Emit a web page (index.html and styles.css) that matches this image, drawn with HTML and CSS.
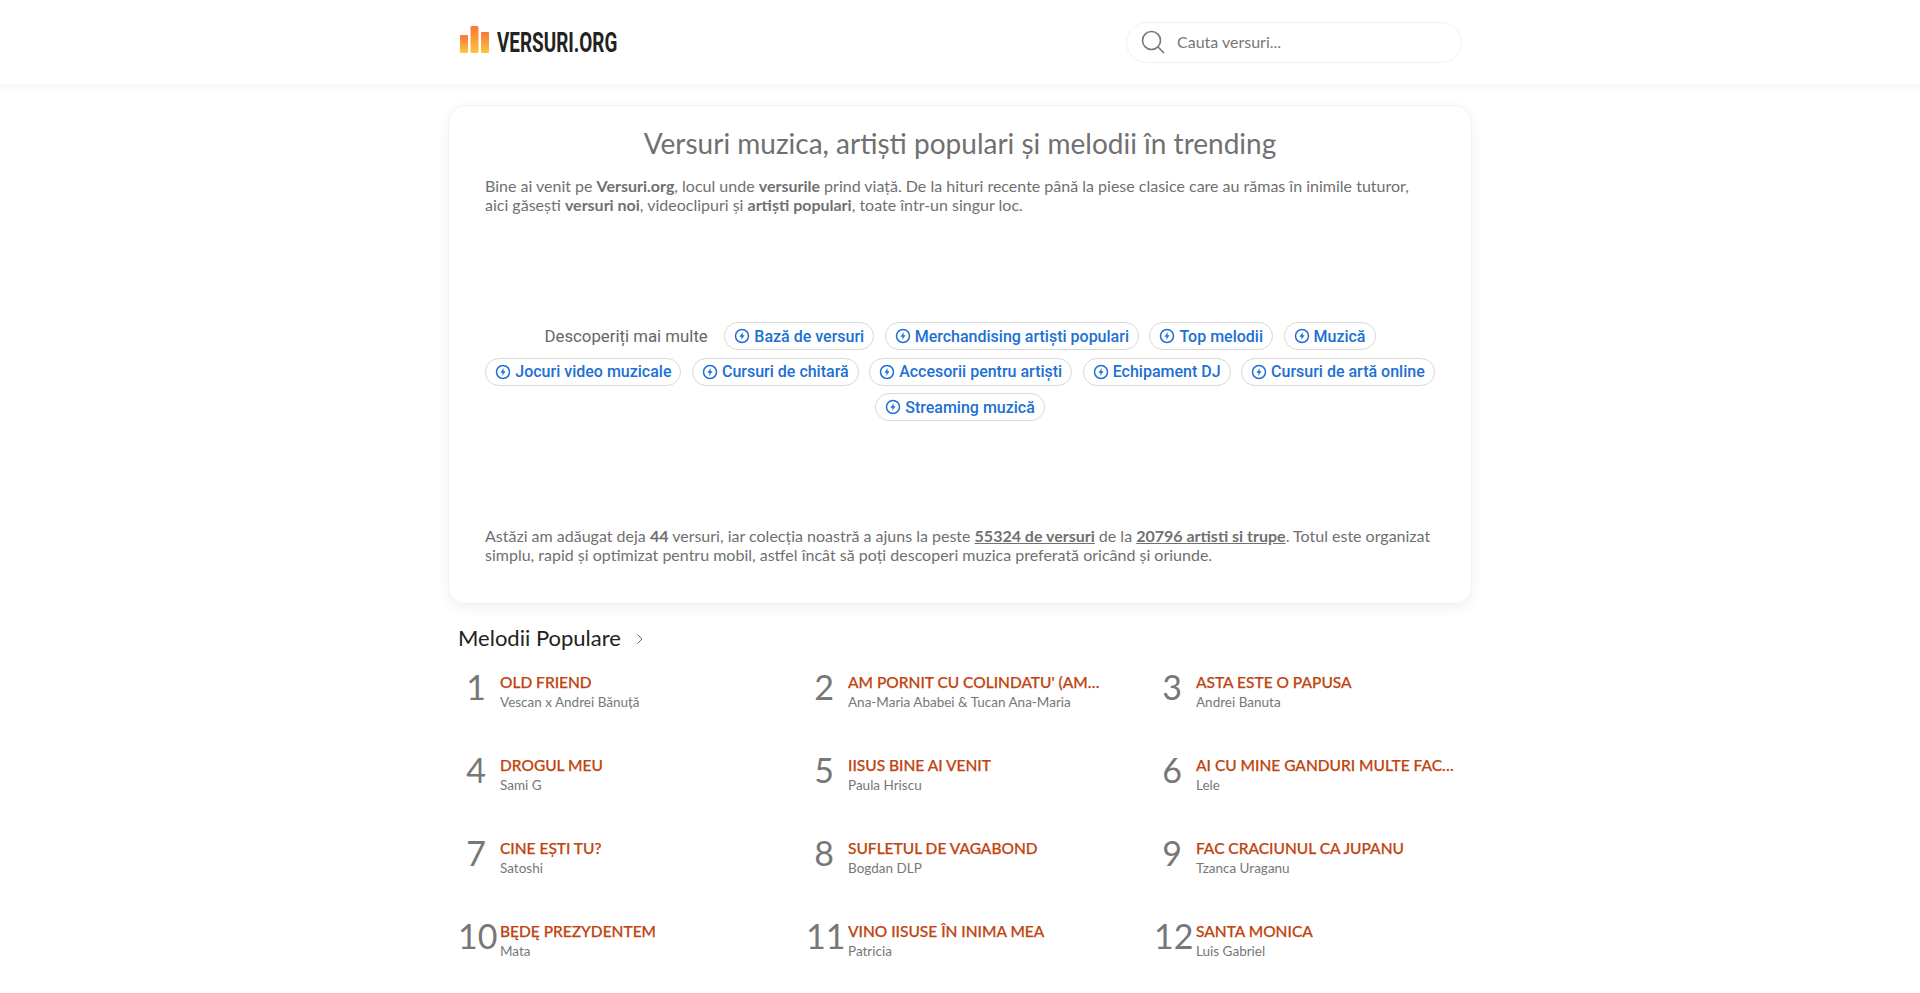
FILE: index.html
```html
<!DOCTYPE html>
<html lang="ro">
<head>
<meta charset="UTF-8">
<meta name="viewport" content="width=device-width, initial-scale=1.0">
<title>Versuri.org</title>
<link rel="stylesheet" href="styles.css">
</head>
<body>
    <header class="topbar">
        <div class="topbar-inner">
            <a class="logo" href="#">
                <svg class="logo-bars" width="29" height="27" viewBox="0 0 29 27">
                    <defs>
                        <linearGradient id="barFill" x1="0" y1="0" x2="0" y2="1">
                            <stop offset="0" stop-color="#f9763a"/>
                            <stop offset="1" stop-color="#fdc63f"/>
                        </linearGradient>
                    </defs>
                    <rect x="0" y="9" width="8" height="18" rx="1" fill="url(#barFill)" />
                    <rect x="10.500" y="0" width="8" height="27" rx="1.500" fill="url(#barFill)" />
                    <rect x="21" y="6" width="8" height="21" rx="1" fill="url(#barFill)" />
                </svg>
                <span class="logo-text">VERSURI.ORG</span>
            </a>
            <div class="search">
                <svg width="24" height="24" viewBox="0 0 24 24" fill="none" stroke="#777" stroke-width="1.600">
                    <circle cx="10.500" cy="10.500" r="9"/>
                    <path d="M17 17l6 6"/>
                </svg>
                <span class="search-hint">Cauta versuri...</span>
            </div>
        </div>
    </header>

    <main class="page">
        <section class="intro">
            <h1>Versuri muzica, artiști populari și melodii în trending</h1>
            <p>Bine ai venit pe <b>Versuri.org</b>, locul unde <b>versurile</b> prind viață. De la hituri recente până la piese clasice care au rămas în inimile tuturor, aici găsești <b>versuri noi</b>, videoclipuri și <b>artiști populari</b>, toate într-un singur loc.</p>

            <div class="chips">
                <span class="chips-label">Descoperiți mai multe</span>
                <a class="chip" href="#"><svg viewBox="0 0 16 16"><circle cx="8" cy="8" r="6.500"/><path class="bolt" d="M8.900 3.900 5.400 8.800h2.200l-.5 3.300 3.500-4.900H8.400z"/></svg>Bază de versuri</a>
                <a class="chip" href="#"><svg viewBox="0 0 16 16"><circle cx="8" cy="8" r="6.500"/><path class="bolt" d="M8.900 3.900 5.400 8.800h2.200l-.5 3.300 3.500-4.900H8.400z"/></svg>Merchandising artiști populari</a>
                <a class="chip" href="#"><svg viewBox="0 0 16 16"><circle cx="8" cy="8" r="6.500"/><path class="bolt" d="M8.900 3.900 5.400 8.800h2.200l-.5 3.300 3.500-4.900H8.400z"/></svg>Top melodii</a>
                <a class="chip" href="#"><svg viewBox="0 0 16 16"><circle cx="8" cy="8" r="6.500"/><path class="bolt" d="M8.900 3.900 5.400 8.800h2.200l-.5 3.300 3.500-4.900H8.400z"/></svg>Muzică</a>
                <a class="chip" href="#"><svg viewBox="0 0 16 16"><circle cx="8" cy="8" r="6.500"/><path class="bolt" d="M8.900 3.900 5.400 8.800h2.200l-.5 3.300 3.500-4.900H8.400z"/></svg>Jocuri video muzicale</a>
                <a class="chip" href="#"><svg viewBox="0 0 16 16"><circle cx="8" cy="8" r="6.500"/><path class="bolt" d="M8.900 3.900 5.400 8.800h2.200l-.5 3.300 3.500-4.900H8.400z"/></svg>Cursuri de chitară</a>
                <a class="chip" href="#"><svg viewBox="0 0 16 16"><circle cx="8" cy="8" r="6.500"/><path class="bolt" d="M8.900 3.900 5.400 8.800h2.200l-.5 3.300 3.500-4.900H8.400z"/></svg>Accesorii pentru artiști</a>
                <a class="chip" href="#"><svg viewBox="0 0 16 16"><circle cx="8" cy="8" r="6.500"/><path class="bolt" d="M8.900 3.900 5.400 8.800h2.200l-.5 3.300 3.500-4.900H8.400z"/></svg>Echipament DJ</a>
                <a class="chip" href="#"><svg viewBox="0 0 16 16"><circle cx="8" cy="8" r="6.500"/><path class="bolt" d="M8.900 3.900 5.400 8.800h2.200l-.5 3.300 3.500-4.900H8.400z"/></svg>Cursuri de artă online</a>
                <a class="chip" href="#"><svg viewBox="0 0 16 16"><circle cx="8" cy="8" r="6.500"/><path class="bolt" d="M8.900 3.900 5.400 8.800h2.200l-.5 3.300 3.500-4.900H8.400z"/></svg>Streaming muzică</a>
            </div>

            <p>Astăzi am adăugat deja <b>44</b> versuri, iar colecția noastră a ajuns la peste <a class="stat" href="#">55324 de versuri</a> de la <a class="stat" href="#">20796 artisti si trupe</a>. Totul este organizat simplu, rapid și optimizat pentru mobil, astfel încât să poți descoperi muzica preferată oricând și oriunde.</p>
        </section>

        <h2 class="section-title">Melodii Populare
            <svg width="10" height="12" viewBox="0 0 10 12" fill="none" stroke="#666" stroke-width="1"><path d="M2.500 1.500 7 6l-4.500 4.500"/></svg>
        </h2>

        <div class="songs">
            <div class="song"><span class="rank">1</span><div class="song-info"><a class="song-title" href="#">OLD FRIEND</a><span class="song-artist">Vescan x Andrei Bănuță</span></div></div>
            <div class="song"><span class="rank">2</span><div class="song-info"><a class="song-title" href="#">AM PORNIT CU COLINDATU' (AMINTIRI DIN COPILARIE)</a><span class="song-artist">Ana-Maria Ababei &amp; Tucan Ana-Maria</span></div></div>
            <div class="song"><span class="rank">3</span><div class="song-info"><a class="song-title" href="#">ASTA ESTE O PAPUSA</a><span class="song-artist">Andrei Banuta</span></div></div>
            <div class="song"><span class="rank">4</span><div class="song-info"><a class="song-title" href="#">DROGUL MEU</a><span class="song-artist">Sami G</span></div></div>
            <div class="song"><span class="rank">5</span><div class="song-info"><a class="song-title" href="#">IISUS BINE AI VENIT</a><span class="song-artist">Paula Hriscu</span></div></div>
            <div class="song"><span class="rank">6</span><div class="song-info"><a class="song-title" href="#">AI CU MINE GANDURI MULTE FACUTE DE TINE</a><span class="song-artist">Lele</span></div></div>
            <div class="song"><span class="rank">7</span><div class="song-info"><a class="song-title" href="#">CINE EȘTI TU?</a><span class="song-artist">Satoshi</span></div></div>
            <div class="song"><span class="rank">8</span><div class="song-info"><a class="song-title" href="#">SUFLETUL DE VAGABOND</a><span class="song-artist">Bogdan DLP</span></div></div>
            <div class="song"><span class="rank">9</span><div class="song-info"><a class="song-title" href="#">FAC CRACIUNUL CA JUPANU</a><span class="song-artist">Tzanca Uraganu</span></div></div>
            <div class="song"><span class="rank">10</span><div class="song-info"><a class="song-title" href="#">BĘDĘ PREZYDENTEM</a><span class="song-artist">Mata</span></div></div>
            <div class="song"><span class="rank">11</span><div class="song-info"><a class="song-title" href="#">VINO IISUSE ÎN INIMA MEA</a><span class="song-artist">Patricia</span></div></div>
            <div class="song"><span class="rank">12</span><div class="song-info"><a class="song-title" href="#">SANTA MONICA</a><span class="song-artist">Luis Gabriel</span></div></div>
        </div>
    </main>
</body>
</html>
```

FILE: styles.css
```css
html, body {
    height: 100%;
    overflow: hidden;
}
body {
    margin: 0;
    font-family: Lato, sans-serif;
    background: #fff;
    color: #666;
}
a {
    text-decoration: none;
    color: inherit;
}

/* header */
.topbar {
    height: 84px;
    background: #fff;
    box-shadow: 0 1px 10px rgba(0, 0, 0, 0.07);
    position: relative;
}
.topbar-inner {
    width: 1024px;
    height: 100%;
    margin: 0 auto;
    display: flex;
    align-items: center;
    justify-content: space-between;
}
.logo {
    display: flex;
    align-items: center;
    gap: 8px;
    margin-left: 12px;
}
.logo-bars {
    margin-bottom: 5px;
}
.logo-text {
    font-family: Roboto, sans-serif;
    font-weight: 700;
    font-size: 28px;
    color: #222;
    display: inline-block;
    width: 120px;
    transform: scaleX(0.675);
    transform-origin: left center;
    white-space: nowrap;
}
.search {
    width: 336px;
    height: 41px;
    margin-right: 10px;
    box-sizing: border-box;
    border: 1px solid #f1f1f1;
    border-radius: 21px;
    display: flex;
    align-items: center;
    gap: 12px;
    padding-left: 14px;
}
.search-hint {
    font-size: 16px;
    color: #777;
    margin-bottom: 1px;
}

/* intro card */
.page {
    width: 1024px;
    margin: 0 auto;
}
.intro {
    margin-top: 21px;
    padding: 17px 36px 0;
    height: 499px;
    box-sizing: border-box;
    border: 1px solid #f3f3f3;
    border-radius: 18px;
    box-shadow: 0 4px 14px rgba(0, 0, 0, 0.06);
}
.intro h1 {
    margin: 0 0 13px;
    font-size: 28px;
    font-weight: 400;
    line-height: 40px;
    text-align: center;
    color: #707070;
}
.intro p {
    margin: 0;
    font-size: 16px;
    line-height: 19px;
    color: #707070;
}
.intro b {
    font-weight: 700;
}
.stat {
    font-weight: 700;
    text-decoration: underline;
}

/* related chips */
.chips {
    height: 312px;
    box-sizing: border-box;
    padding-top: 108px;
    margin: 0 -2px;
    display: flex;
    flex-wrap: wrap;
    justify-content: center;
    align-content: flex-start;
    align-items: center;
    column-gap: 10.500px;
    row-gap: 7.500px;
    font-family: Roboto, sans-serif;
}
.chips-label {
    font-size: 16.800px;
    color: #666;
    margin-right: 6px;
}
.chip {
    display: inline-flex;
    align-items: center;
    gap: 4px;
    height: 28px;
    box-sizing: border-box;
    padding: 0 9px;
    border: 1px solid #d8d8d8;
    border-radius: 15px;
    font-size: 16px;
    font-weight: 500;
    color: #2070d2;
}
.chip svg {
    width: 16px;
    height: 16px;
    fill: none;
    stroke: #2070d2;
    stroke-width: 1.500;
}
.chip .bolt {
    fill: #2070d2;
    stroke: none;
}

/* popular songs */
.section-title {
    margin: 18px 0 0 10px;
    font-size: 22px;
    font-weight: 400;
    line-height: 32px;
    color: #222;
    display: flex;
    align-items: center;
    gap: 14px;
}
.section-title svg {
    margin-top: 2px;
}
.songs {
    display: grid;
    grid-template-columns: repeat(3, 348px);
    grid-auto-rows: 83px;
    margin: 10px 0 0 10px;
}
.song {
    display: flex;
    align-items: flex-start;
    gap: 6px;
    min-width: 0;
}
.rank {
    width: 36px;
    flex: none;
    font-size: 34px;
    line-height: 46px;
    color: #777;
    text-align: center;
    white-space: nowrap;
}
.song-info {
    width: 258px;
    padding-top: 8px;
    display: flex;
    flex-direction: column;
}
/* middle column truncates a little sooner */
.song:nth-child(3n+2) .song-info {
    width: 254px;
}
.song-title {
    font-size: 15.500px;
    font-weight: 500;
    line-height: 21px;
    color: #c0440f;
    -webkit-text-stroke: 0.25px #c0440f;
    white-space: nowrap;
    overflow: hidden;
    text-overflow: ellipsis;
}
.song-artist {
    font-size: 13.500px;
    line-height: 19px;
    color: #777;
}
```
